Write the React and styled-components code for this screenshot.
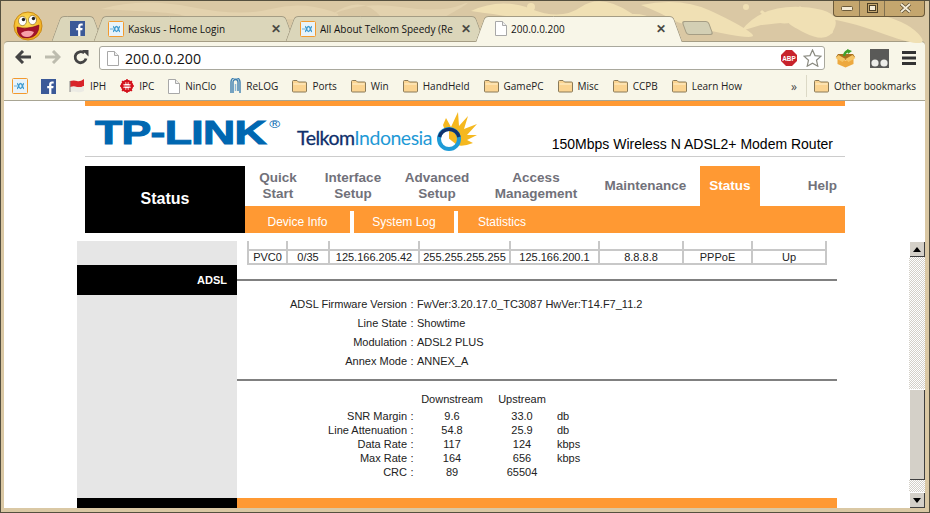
import React from "react"
import styled, { createGlobalStyle } from "styled-components"

const GlobalStyle = createGlobalStyle`
  html, body { margin: 0; padding: 0; background: #d8c6a2; overflow: hidden; }
  * { box-sizing: border-box; }
`

const Win = styled.div`
  position: relative;
  width: 930px;
  height: 513px;
  overflow: hidden;
  display: flex;
  flex-direction: column;
  padding: 0 4px 4px 3px;
  background: #dac8a4;
  border: 1px solid #55503f;
  font-family: "Open Sans", "Liberation Sans", sans-serif;
`

const Swirls = styled.svg`
  position: absolute;
  left: 0;
  top: 0;
`

const WindowButtons = styled.div`
  position: absolute;
  right: 4px;
  top: -1px;
  width: 92px;
  height: 17px;
  display: grid;
  grid-template-columns: 25px 25px 42px;
  background: #c4a66e;
  border: 1px solid #6b5a3a;
  border-top: 0;
  border-radius: 0 0 4px 4px;
`

const WinBtn = styled.div`
  display: flex;
  align-items: center;
  justify-content: center;
  border-left: ${({ $first }) => ($first ? "0" : "1px solid #80704f")};
`

const TabStrip = styled.div`
  position: relative;
  z-index: 1;
  height: 40px;
  padding-left: 9px;
  display: flex;
  align-items: flex-end;
`

const Avatar = styled.svg`
  flex: none;
  margin-right: 13px;
`

const Tab = styled.div`
  position: relative;
  width: ${({ $w }) => $w}px;
  height: ${({ $active }) => ($active ? 26 : 25)}px;
  margin-bottom: ${({ $active }) => ($active ? -1 : 0)}px;
  padding-bottom: ${({ $active }) => ($active ? 1 : 0)}px;
  display: flex;
  align-items: center;
  gap: 4px;
  padding-left: ${({ $pad }) => $pad}px;
  font-size: 10px;
  color: #111;
  white-space: nowrap;
  z-index: ${({ $active }) => ($active ? 2 : 1)};
  &::before, &::after {
    content: "";
    position: absolute;
    top: 0;
    bottom: 0;
    width: 60%;
    background: ${({ $active }) => ($active ? "#f8f6e8" : "#dbd6ba")};
    border: 1px solid #a59d84;
    border-bottom: 0;
    z-index: -1;
  }
  &::before {
    left: 0;
    transform: skewX(-20deg);
    border-right: 0;
    border-radius: 4px 0 0 0;
  }
  &::after {
    right: 0;
    transform: skewX(20deg);
    border-left: 0;
    border-radius: 0 4px 0 0;
  }
`

const TabTitle = styled.span`
  flex: 1;
  min-width: 0;
  overflow: hidden;
`

const TabClose = styled.span`
  flex: none;
  width: 10px;
  margin-right: ${({ $gap }) => $gap}px;
  font-family: "Liberation Sans", sans-serif;
  font-weight: 700;
  font-size: 12px;
  line-height: 12px;
  color: #4a4a44;
`

const NewTab = styled.div`
  width: 27px;
  height: 14px;
  margin: 0 0 6px 6px;
  background: #d3cfb4;
  border: 1px solid #a59d84;
  border-radius: 3px;
  transform: skewX(20deg);
`

const Toolbar = styled.div`
  height: 31px;
  padding: 0 9px 0 11px;
  display: flex;
  align-items: center;
  background: #f8f6e8;
  border-radius: 4px 4px 0 0;
  border-top: 1px solid #a59d84;
`

const NavIcon = styled.svg`
  flex: none;
  margin-right: ${({ $gap }) => $gap}px;
`

const Omnibox = styled.div`
  width: 726px;
  height: 24px;
  margin: 2px 8px 0 0;
  padding: 0 2px 0 7px;
  display: flex;
  align-items: center;
  gap: 6px;
  background: #fff;
  border: 1px solid #a9a89d;
  border-radius: 3px;
  flex: none;
`

const Url = styled.span`
  flex: 1;
  font-size: 14.2px;
  color: #111;
`

const ToolIcons = styled.div`
  flex: 1;
  display: flex;
  align-items: center;
  justify-content: space-between;
  padding: 2px 0 0 2px;
`

const Bookmarks = styled.div`
  height: 29px;
  padding: 0 9px 0 8px;
  display: flex;
  align-items: center;
  background: #f8f6e8;
  font-size: 10px;
  color: #222;
  border-bottom: 1px solid #a8a593;
`

const Mark = styled.div`
  flex: none;
  display: flex;
  align-items: center;
  gap: 5px;
  margin-right: ${({ $gap }) => ($gap === undefined ? 14 : $gap)}px;
  white-space: nowrap;
`

const Chevron = styled.span`
  margin-left: auto;
  margin-right: 9px;
  font-size: 12px;
  color: #444;
`

const Sep = styled.div`
  width: 1px;
  height: 22px;
  margin-right: 7px;
  background: #dcd9c6;
`

const Page = styled.div`
  flex: 1;
  min-height: 0;
  display: flex;
  flex-direction: column;
  background: #fff;
  font-family: "Liberation Sans", Arial, sans-serif;
`

const Header = styled.div`
  width: 760px;
  margin-left: 81px;
  flex: none;
`

const TopBar = styled.div`
  height: 5px;
  background: #ff9933;
`

const Brand = styled.div`
  height: 51px;
  padding-left: 10px;
  display: flex;
  align-items: flex-start;
  border-bottom: 1px solid #cccccc;
`

const TpLink = styled.div`
  width: 184px;
  height: 36px;
  margin-top: 9px;
  font-size: 33px;
  line-height: 36px;
  font-weight: 700;
  color: #0067b1;
  -webkit-text-stroke: 1px #0067b1;
  white-space: nowrap;
  transform: scaleX(1.35);
  transform-origin: 0 0;
  position: relative;
  letter-spacing: -0.5px;
`

const Registered = styled.sup`
  position: absolute;
  left: 129px;
  top: 4px;
  font-size: 11px;
  line-height: 11px;
  font-weight: 400;
  letter-spacing: 0;
  -webkit-text-stroke: 0;
`

const Telkom = styled.div`
  margin: 21px 0 0 18px;
  width: 136px;
  font-family: "Lato", sans-serif;
  font-size: 19.5px;
  line-height: 22px;
  letter-spacing: -0.5px;
  color: #1f9ad6;
  white-space: nowrap;
`

const TelkomDark = styled.span`
  color: #0f2f6b;
  -webkit-text-stroke: 0.3px #0f2f6b;
`

const Sun = styled.svg`
  margin-top: 3px;
  flex: none;
`

const Model = styled.div`
  margin-left: auto;
  margin-top: 30px;
  padding-right: 12px;
  font-size: 14px;
  line-height: 16px;
  color: #000;
  white-space: nowrap;
`

const NavArea = styled.div`
  margin-top: 9px;
  display: grid;
  grid-template-columns: 160px 600px;
  grid-template-rows: 40px 27px;
`

const Current = styled.div`
  grid-row: 1 / 3;
  display: flex;
  align-items: center;
  justify-content: center;
  padding-bottom: 2px;
  background: #000;
  color: #fff;
  font-size: 16px;
  font-weight: 700;
`

const MainNav = styled.div`
  display: grid;
  grid-template-columns: 66px 84px 84px 114px 105px 2px 60px 85px;
`

const NavItem = styled.div`
  display: flex;
  align-items: center;
  justify-content: ${({ $end }) => ($end ? "flex-end" : "center")};
  padding-right: ${({ $end }) => ($end ? 8 : 0)}px;
  text-align: center;
  font-size: 13.5px;
  line-height: 16px;
  font-weight: 700;
  color: ${({ $active }) => ($active ? "#fff" : "#71717a")};
  background: ${({ $active }) => ($active ? "#ff9933" : "transparent")};
`

const SubNav = styled.div`
  display: flex;
  align-items: flex-end;
  background: #ff9933;
`

const SubItem = styled.div`
  width: ${({ $w }) => $w}px;
  height: 22px;
  display: flex;
  align-items: center;
  justify-content: center;
  padding-bottom: 1px;
  font-size: 12px;
  color: #fff;
  border-right: ${({ $last }) => ($last ? "0" : "4px solid #fff")};
`

const FrameRow = styled.div`
  flex: 1;
  min-height: 0;
  margin-top: 8px;
  padding-left: 73px;
  display: flex;
  justify-content: space-between;
`

const Frame = styled.div`
  width: 760px;
  display: grid;
  grid-template-columns: 160px 600px;
  grid-template-rows: 1fr 10px;
  color: #222;
  font-size: 11px;
`

const Side = styled.div`
  background: #e6e6e6;
  padding-top: 24px;
`

const SideActive = styled.div`
  height: 30px;
  padding-right: 10px;
  display: flex;
  align-items: center;
  justify-content: flex-end;
  background: #000;
  color: #fff;
  font-size: 11px;
  font-weight: 700;
`

const Main = styled.div`
  min-width: 0;
`

const TableRow = styled.div`
  margin-left: 10px;
  width: 580px;
  display: grid;
  grid-template-columns: 39px 42px 90px 91px 89px 84px 69px 74px;
  height: ${({ $stub }) => ($stub ? 8 : 16)}px;
  border-left: 2px solid #c8c8c8;
  ${({ $stub }) => !$stub && "border-top: 2px solid #c8c8c8; border-bottom: 2px solid #c8c8c8;"}
`

const TableCell = styled.div`
  display: flex;
  align-items: center;
  justify-content: center;
  padding-bottom: 1px;
  border-right: 2px solid #c8c8c8;
  line-height: 12px;
`

const Rule = styled.div`
  height: 2px;
  margin-top: ${({ $top }) => $top}px;
  background: #808080;
`

const InfoGrid = styled.div`
  margin-top: 13px;
  display: grid;
  grid-template-columns: 170px 10px 1fr;
  grid-auto-rows: 19px;
  align-items: center;
`

const Label = styled.div`
  text-align: right;
  white-space: nowrap;
`

const Colon = styled.div`
  text-align: center;
`

const StatsGrid = styled.div`
  margin-top: 12px;
  display: grid;
  grid-template-columns: 170px 10px 70px 70px 1fr;
  grid-template-rows: 16px repeat(5, 14px);
  align-items: center;
`

const StatsBlank = styled.div`
  grid-column: span ${({ $span }) => $span};
`

const StatsHead = styled.div`
  align-self: start;
  text-align: center;
`

const StatValue = styled.div`
  text-align: center;
`

const Unit = styled.div``

const FootLeft = styled.div`
  background: #000;
`

const FootRight = styled.div`
  background: #ff9933;
`

const Scrollbar = styled.div`
  width: 16px;
  display: flex;
  flex-direction: column;
  background: repeating-conic-gradient(#d4d0c8 0 25%, #fff 0 50%) 0 0 / 2px 2px;
`

const ScrollBtn = styled.div`
  height: 16px;
  display: flex;
  align-items: center;
  justify-content: center;
  background: #d4d0c8;
  box-shadow: inset 1px 1px 0 #fff, inset -1px -1px 0 #404040;
`

const Thumb = styled.div`
  height: 91px;
  margin-top: ${({ $top }) => $top}px;
  margin-bottom: auto;
  background: #d4d0c8;
  box-shadow: inset 1px 1px 0 #fff, inset -1px -1px 0 #404040;
`

const Kaskus = () => (
  <svg width="16" height="16" viewBox="0 0 16 16">
    <rect x="0.5" y="0.5" width="15" height="15" rx="1" fill="#e8f3fa" stroke="#f39a2e" />
    <path d="M2 8h3" stroke="#7fbde0" strokeWidth="1.2" />
    <path d="M5 5.500c1.500 0 1.500 5 3.500 5s2-5 3.500-5M5 10.500c1.500 0 1.500-5 3.500-5s2 5 3.500 5" fill="none" stroke="#3f9bd0" strokeWidth="1.300" />
  </svg>
)

const Fb = () => (
  <svg width="15" height="15" viewBox="0 0 15 15">
    <rect width="15" height="15" fill="#3b5998" />
    <path d="M10.400 15V9.300h1.900l.3-2.200h-2.200V5.700c0-.7.2-1.100 1.100-1.100h1.200V2.600c-.3 0-.9-.1-1.700-.1-1.700 0-2.900 1-2.900 3v1.600h-1.900v2.200h1.900V15z" fill="#fff" />
  </svg>
)

const PageIcon = () => (
  <svg width="12" height="15" viewBox="0 0 12 15">
    <path d="M.5.500h7l4 4v10H.5z" fill="#fff" stroke="#a8a8a8" />
    <path d="M7.500.500v4h4" fill="#eee" stroke="#a8a8a8" />
  </svg>
)

const Folder = () => (
  <svg width="15" height="14" viewBox="0 0 15 14">
    <path d="M.5 2.500q0-1 1-1h3.500l1.500 1.500h7q1 0 1 1v8q0 1-1 1h-12q-1 0-1-1z" fill="#fbd491" stroke="#8a7a58" />
    <path d="M1.500 5h12" stroke="#fff2d0" />
  </svg>
)

const Face = () => (
  <Avatar width="30" height="30" viewBox="0 0 30 30">
    <defs>
      <radialGradient id="faceFill" cx="0.45" cy="0.35" r="0.7">
        <stop offset="0" stopColor="#ffe860" />
        <stop offset="1" stopColor="#f0a010" />
      </radialGradient>
    </defs>
    <circle cx="15" cy="15" r="14" fill="url(#faceFill)" stroke="#c98a18" />
    <ellipse cx="9.500" cy="10" rx="4" ry="4.600" fill="#fff" stroke="#7a5510" strokeWidth="0.6" />
    <ellipse cx="19.500" cy="9" rx="4" ry="4.600" fill="#fff" stroke="#7a5510" strokeWidth="0.6" />
    <circle cx="10.500" cy="8.500" r="1.700" fill="#222" />
    <circle cx="20.500" cy="7.500" r="1.700" fill="#222" />
    <path d="M4 16q10 3 22-2q0 12-11 13T4 16z" fill="#a3122a" stroke="#7a1020" strokeWidth="0.6" />
    <path d="M8 22q6-4 13-1q-2 5-7 5t-6-4z" fill="#f7a0a8" />
  </Avatar>
)

const Back = ({ color, flip, gap }) => (
  <NavIcon $gap={gap} width="17" height="14" viewBox="0 0 17 14" style={flip ? { transform: "scaleX(-1)" } : undefined}>
    <path d="M8 1L2 7l6 6M2 7h14" fill="none" stroke={color} strokeWidth="3" />
  </NavIcon>
)

const Reload = () => (
  <NavIcon $gap={10} width="16" height="16" viewBox="0 0 16 16">
    <path d="M13 9.500A5.500 5.500 0 1 1 11.200 4" fill="none" stroke="#444" strokeWidth="2.800" />
    <path d="M9 1h6.500v6.500z" fill="#444" />
  </NavIcon>
)

const Abp = () => (
  <svg width="16" height="16" viewBox="0 0 16 16">
    <path d="M5 0h6l5 5v6l-5 5H5l-5-5V5z" fill="#c8232c" />
    <text x="8" y="10.600" textAnchor="middle" fontFamily="Liberation Sans" fontWeight="700" fontSize="6.400" fill="#fff">ABP</text>
  </svg>
)

const Star = () => (
  <svg width="19" height="18" viewBox="0 0 19 18">
    <path d="M9.500 1l2.500 5.600 6 .6-4.500 4 1.300 6-5.300-3-5.300 3 1.300-6-4.500-4 6-.6z" fill="#fff" stroke="#8a8a80" strokeWidth="1.200" />
  </svg>
)

const BoxIcon = () => (
  <svg width="21" height="19" viewBox="0 0 21 19">
    <path d="M1 8l9.500 3 9.500-3-2-3H3z" fill="#a9701e" />
    <path d="M2.500 9l8 2.500 8-2.500v6l-8 3.500-8-3.500z" fill="#eda93f" />
    <path d="M0.500 9l3-3 7 4-3 3zM20.500 9l-3-3-7 4 3 3z" fill="#f6c565" />
    <path d="M9 7q1-5 5-5" fill="none" stroke="#3fa12c" strokeWidth="2.400" />
    <path d="M12 0l5 2-4 3z" fill="#3fa12c" />
  </svg>
)

const Glasses = () => (
  <svg width="19" height="19" viewBox="0 0 19 19">
    <rect width="19" height="19" fill="#5a5a58" />
    <circle cx="5" cy="14" r="3.600" fill="#eeeeea" />
    <circle cx="14" cy="14" r="3.600" fill="#eeeeea" />
  </svg>
)

const Menu = () => (
  <svg width="14" height="14" viewBox="0 0 14 14">
    <path d="M0 0h14v3H0zM0 5.500h14v3H0zM0 11h14v3H0z" fill="#333" />
  </svg>
)

const FlagIcon = () => (
  <svg width="16" height="16" viewBox="0 0 16 16">
    <path d="M1 3q4-1 7 0t7-2v7q-4 2-7 1t-7 0z" fill="#d8232a" />
    <path d="M1 9q4-1 7 0t7-1v5q-4 2-7 1t-7 0z" fill="#ecebe4" />
    <path d="M1 3v11" stroke="#888" />
  </svg>
)

const GearIcon = () => (
  <svg width="14" height="14" viewBox="0 0 14 14">
    <circle cx="7" cy="7" r="5" fill="none" stroke="#d4121c" strokeWidth="2.400" />
    <path d="M7 0v14M0 7h14M2 2l10 10M12 2L2 12" stroke="#d4121c" strokeWidth="1.400" />
    <rect x="4.500" y="5" width="5" height="4" fill="#fff" />
    <path d="M4.500 7h5" stroke="#d4121c" />
  </svg>
)

const ClipIcon = () => (
  <svg width="11" height="16" viewBox="0 0 11 16">
    <path d="M3 15V4a2.500 2.500 0 0 1 5 0v9M1 15V4a4.500 4.500 0 0 1 9 0v11" fill="none" stroke="#3d7fb0" strokeWidth="1.400" />
    <path d="M5.500 6v7" stroke="#8ab8d8" strokeWidth="1.400" />
  </svg>
)

const SunLogo = () => (
  <Sun width="48" height="44" viewBox="0 0 48 44">
    <path d="M14 28L10 16l3-7 5 9 7-15 1 14 9-10-4 13 13-5-10 11 10 0-10 5 6 3q-10 4-16 2z" fill="#f5b81f" />
    <path d="M16 21a9 9 0 0 0 0 18z" fill="#fff" />
    <circle cx="16" cy="30" r="10" fill="none" stroke="#1e9bd7" strokeWidth="4" />
    <path d="M6.500 28A10 10 0 0 1 26 28" fill="none" stroke="#12336e" strokeWidth="3.500" />
  </Sun>
)

const pvcRow = ["PVC0", "0/35", "125.166.205.42", "255.255.255.255", "125.166.200.1", "8.8.8.8", "PPPoE", "Up"]

const adslInfo = [
  ["ADSL Firmware Version", "FwVer:3.20.17.0_TC3087 HwVer:T14.F7_11.2"],
  ["Line State", "Showtime"],
  ["Modulation", "ADSL2 PLUS"],
  ["Annex Mode", "ANNEX_A"],
]

const stats = [
  ["SNR Margin", "9.6", "33.0", "db"],
  ["Line Attenuation", "54.8", "25.9", "db"],
  ["Data Rate", "117", "124", "kbps"],
  ["Max Rate", "164", "656", "kbps"],
  ["CRC", "89", "65504", ""],
]

const marks = [
  { icon: <FlagIcon />, label: "IPH" },
  { icon: <GearIcon />, label: "IPC" },
  { icon: <PageIcon />, label: "NinClo" },
  { icon: <ClipIcon />, label: "ReLOG" },
  { icon: <Folder />, label: "Ports" },
  { icon: <Folder />, label: "Win" },
  { icon: <Folder />, label: "HandHeld" },
  { icon: <Folder />, label: "GamePC" },
  { icon: <Folder />, label: "Misc" },
  { icon: <Folder />, label: "CCPB" },
  { icon: <Folder />, label: "Learn How" },
]

export default function App() {
  return (
    <Win>
      <GlobalStyle />
      <Swirls width="930" height="42" viewBox="0 0 930 42">
        <g fill="#f0e0b4">
          <path d="M470 10q30-14 60-2t50-2 50 6-40 12-60-6-60-8z" />
          <path d="M640 4q40-8 70 6t40 22-30 0-50-14-30-14z" />
          <path d="M740 30q20-26 60-24t34 20-30 6-14-12-30 4z" />
          <path d="M820 20q30-14 60-6t40 22-40-4-60-12z" />
          <circle cx="530" cy="6" r="4" />
          <circle cx="590" cy="8" r="3" />
          <circle cx="745" cy="6" r="3" />
          <circle cx="829" cy="30" r="3" />
        </g>
        <g fill="none" stroke="#f0e0b4" strokeWidth="3">
          <path d="M600 30q20-20 44-14t10 16" />
          <path d="M760 10q14 14 30 10t8-14" />
        </g>
        <g fill="#e3d2ae">
          <path d="M100 8q40-12 90-2t80 2 60 2-60 8-90-4-80-6z" />
          <path d="M330 14q30-14 70-8t60-2-20 14-60-2-50-2z" />
        </g>
      </Swirls>
      <WindowButtons>
        <WinBtn $first>
          <svg width="12" height="5" viewBox="0 0 12 5"><rect x="0.5" y="0.500" width="11" height="4" rx="1" fill="#f4ecd8" stroke="#6b5a3a" /></svg>
        </WinBtn>
        <WinBtn>
          <svg width="11" height="10" viewBox="0 0 11 10"><rect x="0.5" y="0.500" width="10" height="9" fill="none" stroke="#4c3f26" /><rect x="2.5" y="2.500" width="6" height="5" fill="#f4ecd8" stroke="#4c3f26" /></svg>
        </WinBtn>
        <WinBtn>
          <svg width="13" height="10" viewBox="0 0 13 10"><path d="M2 1l9 8M11 1L2 9" stroke="#5b4c30" strokeWidth="3.400" /><path d="M2 1l9 8M11 1L2 9" stroke="#f4ecd8" strokeWidth="1.800" /></svg>
        </WinBtn>
      </WindowButtons>
      <TabStrip>
        <Face />
        <Tab $w={42} $pad={14}><Fb /></Tab>
        <Tab $w={192} $pad={10}>
          <Kaskus />
          <TabTitle>Kaskus - Home Login</TabTitle>
          <TabClose $gap={9}>✕</TabClose>
        </Tab>
        <Tab $w={190} $pad={10}>
          <Kaskus />
          <TabTitle>All About Telkom Speedy (Re</TabTitle>
          <TabClose $gap={9}>✕</TabClose>
        </Tab>
        <Tab $w={198} $pad={15} $active>
          <PageIcon />
          <TabTitle>200.0.0.200</TabTitle>
          <TabClose $gap={12}>✕</TabClose>
        </Tab>
        <NewTab />
      </TabStrip>
      <Toolbar>
        <Back color="#444" gap={12} />
        <Back color="#bdbcae" flip gap={12} />
        <Reload />
        <Omnibox>
          <PageIcon />
          <Url>200.0.0.200</Url>
          <Abp />
          <Star />
        </Omnibox>
        <ToolIcons>
          <BoxIcon />
          <Glasses />
          <Menu />
        </ToolIcons>
      </Toolbar>
      <Bookmarks>
        <Mark $gap={13}><Kaskus /></Mark>
        <Mark $gap={13}><Fb /></Mark>
        {marks.map((m) => (
          <Mark key={m.label}>{m.icon}{m.label}</Mark>
        ))}
        <Chevron>»</Chevron>
        <Sep />
        <Mark $gap={0}><Folder />Other bookmarks</Mark>
      </Bookmarks>
      <Page>
        <Header>
          <TopBar />
          <Brand>
            <TpLink>TP-LINK<Registered>®</Registered></TpLink>
            <Telkom><TelkomDark>Telkom</TelkomDark>Indonesia</Telkom>
            <SunLogo />
            <Model>150Mbps Wireless N ADSL2+ Modem Router</Model>
          </Brand>
          <NavArea>
            <Current>Status</Current>
            <MainNav>
              <NavItem>Quick<br />Start</NavItem>
              <NavItem>Interface<br />Setup</NavItem>
              <NavItem>Advanced<br />Setup</NavItem>
              <NavItem>Access<br />Management</NavItem>
              <NavItem>Maintenance</NavItem>
              <div />
              <NavItem $active>Status</NavItem>
              <NavItem $end>Help</NavItem>
            </MainNav>
            <SubNav>
              <SubItem $w={109}>Device Info</SubItem>
              <SubItem $w={104}>System Log</SubItem>
              <SubItem $w={88} $last>Statistics</SubItem>
            </SubNav>
          </NavArea>
        </Header>
        <FrameRow>
          <Frame>
            <Side><SideActive>ADSL</SideActive></Side>
            <Main>
              <TableRow $stub>
                {pvcRow.map((c) => <TableCell key={c} />)}
              </TableRow>
              <TableRow>
                {pvcRow.map((c) => <TableCell key={c}>{c}</TableCell>)}
              </TableRow>
              <Rule $top={14} />
              <InfoGrid>
                {adslInfo.map(([k, v]) => (
                  <React.Fragment key={k}>
                    <Label>{k}</Label>
                    <Colon>:</Colon>
                    <div>{v}</div>
                  </React.Fragment>
                ))}
              </InfoGrid>
              <Rule $top={9} />
              <StatsGrid>
                <StatsBlank $span={2} />
                <StatsHead>Downstream</StatsHead>
                <StatsHead>Upstream</StatsHead>
                <StatsBlank $span={1} />
                {stats.map(([k, d, u, unit]) => (
                  <React.Fragment key={k}>
                    <Label>{k}</Label>
                    <Colon>:</Colon>
                    <StatValue>{d}</StatValue>
                    <StatValue>{u}</StatValue>
                    <Unit>{unit}</Unit>
                  </React.Fragment>
                ))}
              </StatsGrid>
            </Main>
            <FootLeft />
            <FootRight />
          </Frame>
          <Scrollbar>
            <ScrollBtn>
              <svg width="8" height="5" viewBox="0 0 8 5"><path d="M4 0l4 5H0z" fill="#000" /></svg>
            </ScrollBtn>
            <Thumb $top={132} />
            <ScrollBtn>
              <svg width="8" height="5" viewBox="0 0 8 5"><path d="M0 0h8L4 5z" fill="#000" /></svg>
            </ScrollBtn>
          </Scrollbar>
        </FrameRow>
      </Page>
    </Win>
  )
}
